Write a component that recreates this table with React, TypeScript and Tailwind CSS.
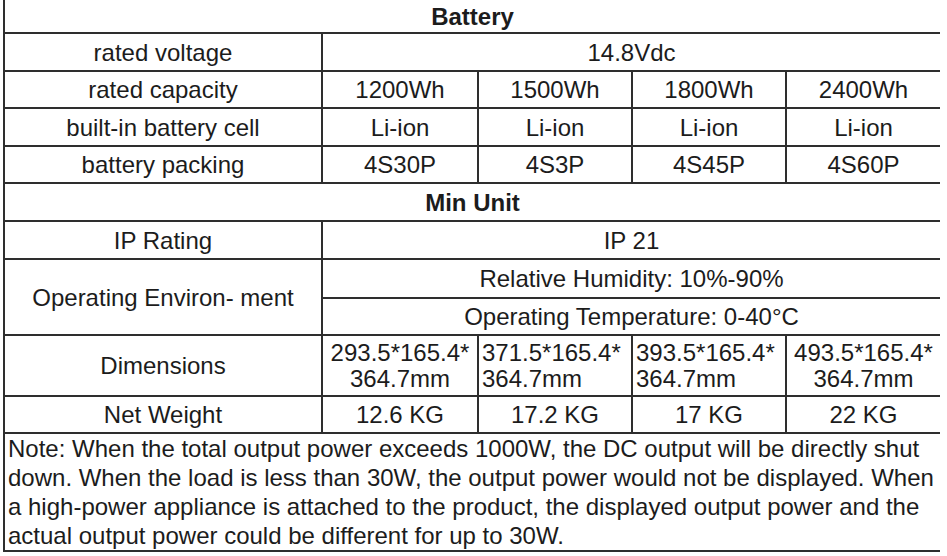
const cell = 'bg-white flex items-center justify-center text-center pt-[1px]';
const full4 = 'col-span-4';

const capacities = ['1200Wh', '1500Wh', '1800Wh', '2400Wh'];
const packs = ['4S30P', '4S3P', '4S45P', '4S60P'];
const weights = ['12.6 KG', '17.2 KG', '17 KG', '22 KG'];
const dims = [
  { a: '293.5*165.4*', align: 'center' },
  { a: '371.5*165.4*', align: 'left' },
  { a: '393.5*165.4*', align: 'left' },
  { a: '493.5*165.4*', align: 'center' },
];

const noteLines = [
  'Note: When the total output power exceeds 1000W, the DC output will be directly shut',
  'down. When the load is less than 30W, the output power would not be displayed. When',
  'a high-power appliance is attached to the product, the displayed output power and the',
  'actual output power could be different for up to 30W.',
];

export default function App() {
  return (
    <div
      className="w-[947px] h-[556px] bg-white text-[#1c1c1c] text-[24px] leading-none"
      style={{ fontFamily: '"Liberation Sans", Arial, Helvetica, sans-serif' }}
    >
      <div className="ml-[3px] w-[937px] bg-[#2e2e2e] px-[2px] pb-[2px] grid gap-[2px] grid-cols-[316px_154px_152px_152px_153px] grid-rows-[32px_36px_35px_36px_35px_36px_36px_37px_35px_59px_35px_116px]">
        <div className={`${cell} col-span-5 font-bold`}>Battery</div>

        <div className={cell}>rated voltage</div>
        <div className={`${cell} ${full4}`}>14.8Vdc</div>

        <div className={cell}>rated capacity</div>
        {capacities.map((c) => (
          <div key={c} className={cell}>{c}</div>
        ))}

        <div className={cell}>built-in battery cell</div>
        {[0, 1, 2, 3].map((i) => (
          <div key={i} className={cell}>Li-ion</div>
        ))}

        <div className={cell}>battery packing</div>
        {packs.map((p) => (
          <div key={p} className={cell}>{p}</div>
        ))}

        <div className={`${cell} col-span-5 font-bold`}>Min Unit</div>

        <div className={cell}>IP Rating</div>
        <div className={`${cell} ${full4}`}>IP 21</div>

        <div className={`${cell} row-span-2`}>Operating Environ- ment</div>
        <div className={`${cell} ${full4}`}>Relative Humidity: 10%-90%</div>
        <div className={`${cell} ${full4}`}>Operating Temperature: 0-40°C</div>

        <div className={cell}>Dimensions</div>
        {dims.map((d) => (
          <div
            key={d.a}
            className={
              d.align === 'left'
                ? 'bg-white flex flex-col justify-center items-start pl-[3px] pt-[1px] leading-[26px] whitespace-nowrap'
                : 'bg-white flex flex-col justify-center items-center pt-[1px] leading-[26px] whitespace-nowrap'
            }
          >
            <span>{d.a}</span>
            <span>364.7mm</span>
          </div>
        ))}

        <div className={cell}>Net Weight</div>
        {weights.map((w) => (
          <div key={w} className={cell}>{w}</div>
        ))}

        <div className="bg-white col-span-5 pl-[3px] leading-[29px]">
          {noteLines.map((l) => (
            <div key={l} className="whitespace-nowrap">{l}</div>
          ))}
        </div>
      </div>
    </div>
  );
}
